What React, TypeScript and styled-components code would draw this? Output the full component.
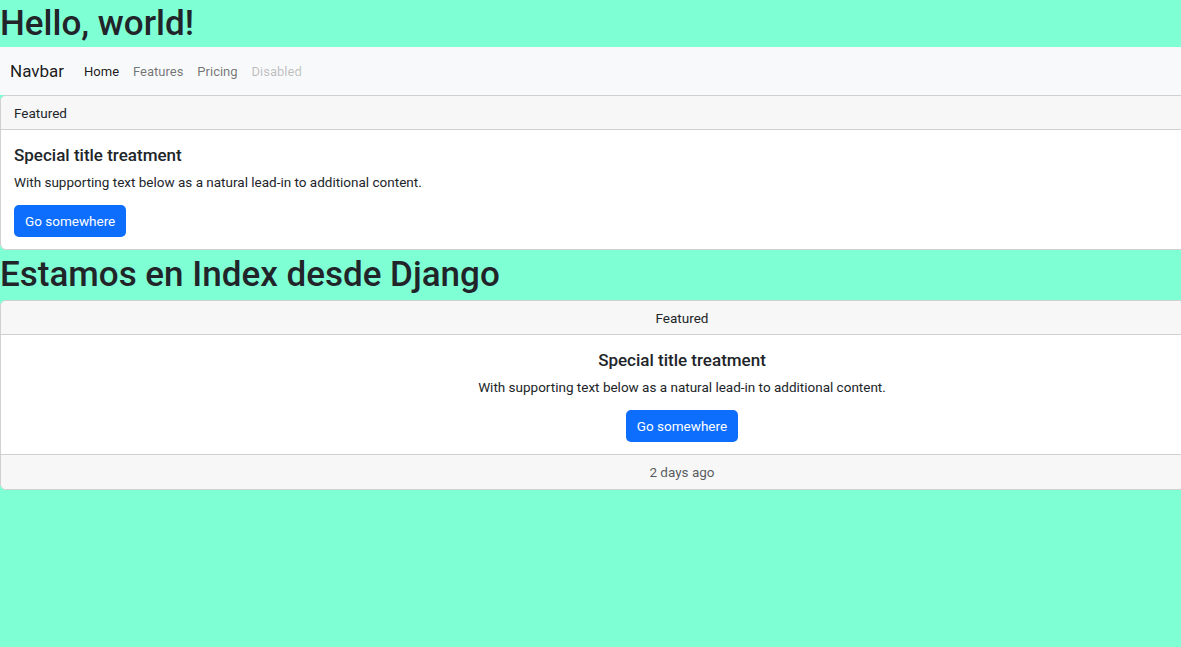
import React from "react";
import styled, { createGlobalStyle } from "styled-components";

const Global = createGlobalStyle`
  html, body { margin: 0; padding: 0; }
  body {
    background: #7fffd4;
    font-family: Roboto, "Noto Sans", "Liberation Sans", sans-serif;
    color: #212529;
    font-size: 13.5px;
    overflow-x: hidden;
  }
  * { box-sizing: border-box; }
`;

const Page = styled.div`
  width: 1364px;
`;

const Heading = styled.h1<{ $h: number }>`
  margin: 0;
  font-size: 35px;
  font-weight: 500;
  line-height: ${(p) => p.$h}px;
  height: ${(p) => p.$h}px;
  color: #212529;
`;

const NavBar = styled.nav`
  display: flex;
  align-items: center;
  height: 48px;
  padding: 0 10px;
  background: #f8f9fa;
`;

const Brand = styled.a`
  font-size: 17px;
  color: rgba(0, 0, 0, 0.9);
  margin-right: 13px;
  text-decoration: none;
`;

const NavList = styled.div`
  display: flex;
`;

const NavLink = styled.a<{ $state?: "active" | "disabled" }>`
  padding: 0 7px;
  font-size: 13px;
  text-decoration: none;
  color: ${(p) =>
    p.$state === "active"
      ? "rgba(0,0,0,0.9)"
      : p.$state === "disabled"
      ? "rgba(0,0,0,0.25)"
      : "rgba(0,0,0,0.55)"};
`;

const Card = styled.div<{ $center?: boolean }>`
  background: #fff;
  border: 1px solid #d0d0d0;
  border-radius: 6px;
  overflow: hidden;
  text-align: ${(p) => (p.$center ? "center" : "left")};
`;

const CardHeader = styled.div`
  background: #f7f7f7;
  border-bottom: 1px solid #d0d0d0;
  padding: 7px 13px 5px;
  line-height: 21px;
`;

const CardFooter = styled.div`
  background: #f7f7f7;
  border-top: 1px solid #d0d0d0;
  padding: 7px 13px 6px;
  line-height: 21px;
  color: rgba(33, 37, 41, 0.75);
`;

const CardBody = styled.div`
  padding: 15px 13px 12px;
`;

const CardTitle = styled.h5`
  margin: 0 0 7px;
  font-size: 17px;
  font-weight: 500;
  line-height: 20px;
`;

const CardText = styled.p`
  margin: 0 0 12px;
  line-height: 21px;
`;

const Button = styled.a`
  display: inline-block;
  height: 32px;
  line-height: 32px;
  padding: 0 11px;
  background: #0d6efd;
  color: #fff;
  border-radius: 5px;
  text-decoration: none;
  font-size: 13.5px;
`;

function FeaturedCard({ center, footer }: { center?: boolean; footer?: string }) {
  return (
    <Card $center={center}>
      <CardHeader>Featured</CardHeader>
      <CardBody>
        <CardTitle>Special title treatment</CardTitle>
        <CardText>With supporting text below as a natural lead-in to additional content.</CardText>
        <Button href="#">Go somewhere</Button>
      </CardBody>
      {footer && <CardFooter>{footer}</CardFooter>}
    </Card>
  );
}

export default function App() {
  return (
    <Page>
      <Global />
      <Heading $h={47}>Hello, world!</Heading>
      <NavBar>
        <Brand href="#">Navbar</Brand>
        <NavList>
          <NavLink $state="active" href="#">Home</NavLink>
          <NavLink href="#">Features</NavLink>
          <NavLink href="#">Pricing</NavLink>
          <NavLink $state="disabled">Disabled</NavLink>
        </NavList>
      </NavBar>
      <FeaturedCard />
      <Heading $h={50}>Estamos en Index desde Django</Heading>
      <FeaturedCard center footer="2 days ago" />
    </Page>
  );
}
